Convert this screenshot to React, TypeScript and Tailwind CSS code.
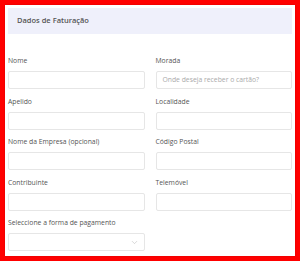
import { ChevronDown } from 'lucide-react';

const FIELDS: [string, string][] = [
  ['Nome', 'Morada'],
  ['Apelido', 'Localidade'],
  ['Nome da Empresa (opcional)', 'Código Postal'],
  ['Contribuinte', 'Telemóvel'],
];

function Field({ label, placeholder }: { label: string; placeholder?: string }) {
  return (
    <div className="flex flex-col">
      <label className="text-[6.8px] leading-[10px] text-[#555] mb-[5px]">{label}</label>
      <div className="h-[18px] border border-[#e6e6e6] rounded-[2px] bg-white flex items-center px-[6px]">
        {placeholder && <span className="text-[6.8px] text-[#aaa]">{placeholder}</span>}
      </div>
    </div>
  );
}

export default function App() {
  return (
    <div
      className="w-[300px] h-[261px] bg-[#ff0000] p-[5px]"
      style={{ fontFamily: '"Open Sans", "Noto Sans", sans-serif' }}
    >
      <div className="w-full h-full bg-white px-[3px] pt-[3px] shadow-[0_0_2px_rgba(0,0,0,0.15)]">
        {/* Header */}
        <div className="h-[26px] bg-[#eff0fb] flex items-center px-[9px]">
          <span className="text-[7.5px] font-semibold text-[#555]">Dados de Faturação</span>
        </div>

        {/* Form */}
        <div className="grid grid-cols-2 gap-x-[11px] gap-y-[7.5px] pt-[22px]">
          {FIELDS.map(([left, right]) => (
            <>
              <Field key={left} label={left} />
              <Field
                key={right}
                label={right}
                placeholder={right === 'Morada' ? 'Onde deseja receber o cartão?' : undefined}
              />
            </>
          ))}
          <div className="flex flex-col">
            <label className="text-[6.8px] leading-[10px] text-[#555] mb-[5px]">
              Seleccione a forma de pagamento
            </label>
            <div className="h-[18px] border border-[#e6e6e6] rounded-[2px] bg-white flex items-center justify-end px-[5px]">
              <ChevronDown className="w-[9px] h-[9px] text-[#bbb]" strokeWidth={1.5} />
            </div>
          </div>
        </div>
      </div>
    </div>
  );
}
